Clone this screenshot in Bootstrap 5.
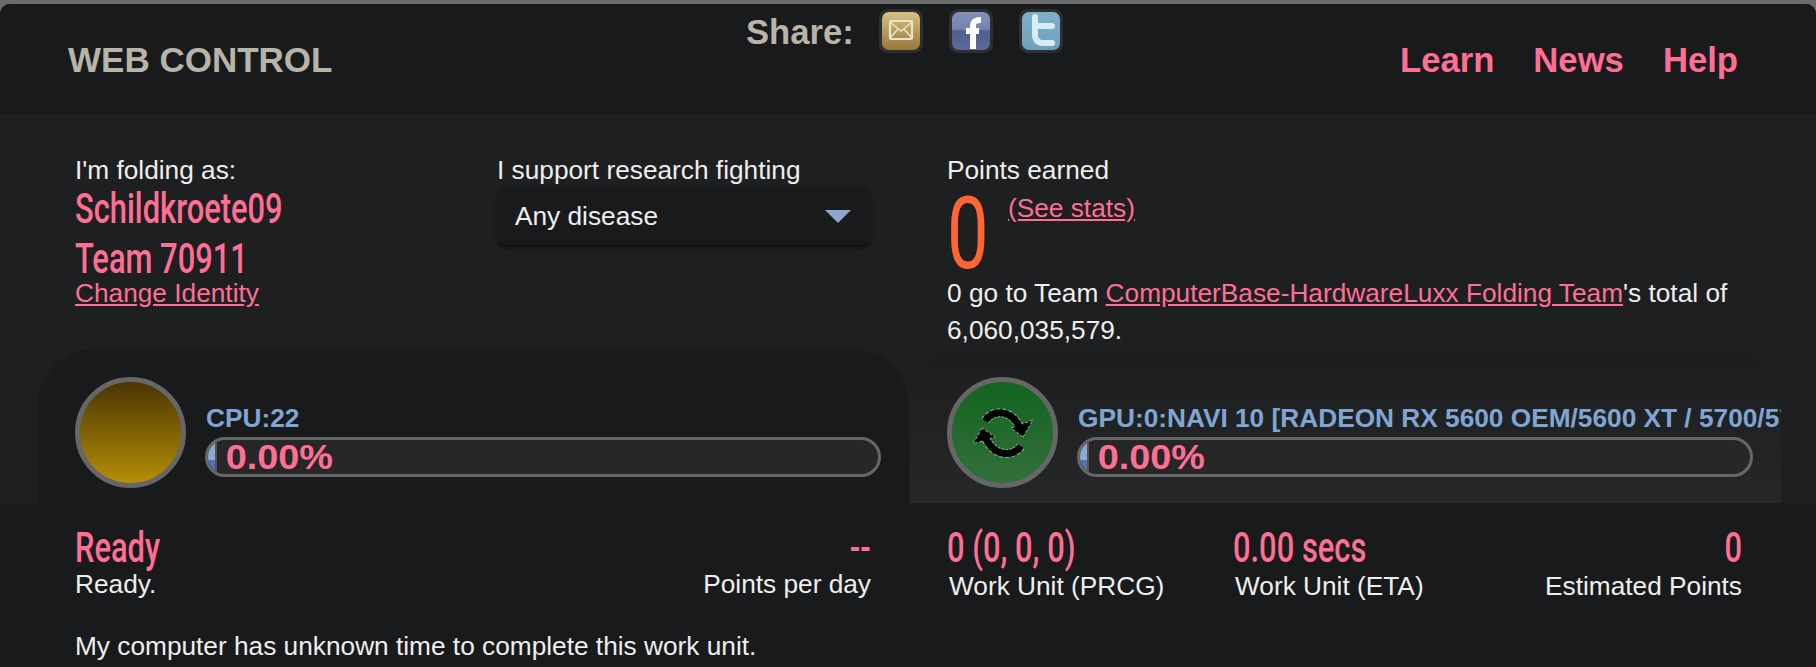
<!DOCTYPE html>
<html lang="en"><head><meta charset="utf-8"><title>Web Control</title>
<link href="https://cdn.jsdelivr.net/npm/bootstrap@5.3.0/dist/css/bootstrap.min.css" rel="stylesheet">
<style>
html,body{height:667px;overflow:hidden;background:#6b6b6b}
body{font-family:"Liberation Sans",Arial,sans-serif;font-size:26.25px;line-height:36px;color:#eee;padding-top:4px}
a{color:#ff6f94}
.shell{background:#1e1f21;border-radius:10px 10px 0 0;overflow:hidden;height:663px}
.top{height:110px;background:#191a1c;padding:0 78px 0 68px}
.brand{font-weight:700;font-size:35px;line-height:40px;color:#b8b4a8;margin-top:36px;width:678px}
.share{font-weight:700;font-size:34.67px;line-height:40px;color:#b8b4a8;gap:24px;margin-top:8px}
.share svg{display:block;width:46px;height:46px}
.icons{gap:24px;margin-top:-4px}
.navs{gap:39px;margin-top:36px;font-weight:700;font-size:34.67px;line-height:40px}
.navs a{color:#ff6f94;text-decoration:none}
.info{height:235px;padding:0 0 0 75px}
.c1{width:422px;padding-top:38px}.c2{width:450px;padding-top:38px}.c3{width:790px;padding-top:38px}
.cond{font-family:Roboto,sans-serif;font-weight:500;color:#ff6f94;transform:scaleX(.735);transform-origin:0 50%;white-space:nowrap}
.who{font-size:42px;line-height:50px}
.who-first{margin-top:-4px}
.lnk{line-height:30px;display:block;margin-top:-6px}
.pick{width:374px;height:58px;background:#191a1c;border-radius:8px;box-shadow:0 3px 3px #111;padding:0 20px 0 18px;margin-top:-1px}
.arrow{width:0;height:0;border:13px solid transparent;border-top:13px solid #8ea6cf;border-bottom:0}
.big{font-family:Roboto,sans-serif;font-size:100px;line-height:82px;color:#ff6433;margin-top:5px;width:61px;transform:scaleX(.74);transform-origin:0 50%}
.stats{margin-top:5px;line-height:30px;height:30px}
.mt-line{margin-top:0;line-height:37px}
.panels{height:154px;padding-left:38px;padding-right:35px}
.slot{width:871px;padding:28px 0 0 37px;border-radius:56px 56px 0 0;overflow:hidden;background:#191a1c}
.slot.gpu{margin-left:1px;background:linear-gradient(#1c1d1f,#262729)}
.disc{width:111px;height:111px;flex:none;border-radius:50%;border:5px solid #666;margin-right:19px}
.disc.idle{background:linear-gradient(#4a3505,#b68f08)}
.disc.run{background:linear-gradient(#12641f,#336f3c)}
.meter{flex:1;min-width:0;padding-top:26px;padding-right:28px}
.dev{font-weight:700;line-height:30px;color:#7fa6d2;white-space:nowrap;margin:0 -28px 4px 0;padding-left:1px}
.bar{height:40px;border:3px solid #666;border-radius:20px;background:#272727;overflow:hidden}
.fill{width:9px;height:100%;background:linear-gradient(#8aa9d6 60%,#4a75b0 60%);border-right:2px solid #555}
.pct{font-weight:700;font-size:35px;line-height:34px;color:#ff6f94;padding-left:8px;transform:scaleX(1.08);transform-origin:0 50%}
.lower{background:#191a1c;height:164px;padding:22px 0 0 75px}
.val{font-size:42px;line-height:46px}
.cap{line-height:30px}
.cap-up{margin-top:-2px}
.leftcol{width:796px;flex:none}
.rightcol{margin-left:76px}
.w1{width:286px}.w2{width:312px}.w3{width:197px}
.caps{margin-left:2px}
.ori-r{transform-origin:100% 50%}
.l2{margin-top:27px}
</style></head><body>
<div class="shell">
<div class="top d-flex">
  <div class="brand">WEB CONTROL</div>
  <div class="share d-flex flex-grow-1"><span>Share:</span>
    <div class="icons d-flex align-items-start">
      <svg viewBox="0 0 46 46" role="img" aria-label="Email"><rect x="1" y="1" width="44" height="44" rx="9" fill="#2d2e30"/><defs><linearGradient id="g1" x1="0" y1="0" x2="0" y2="1"><stop offset="0" stop-color="#d6c184"/><stop offset="1" stop-color="#96783a"/></linearGradient><linearGradient id="g2" x1="0" y1="0" x2="0" y2="1"><stop offset="0" stop-color="#8490b8"/><stop offset=".45" stop-color="#7583ae"/><stop offset=".5" stop-color="#525f92"/><stop offset="1" stop-color="#5b6898"/></linearGradient><linearGradient id="g3" x1="0" y1="0" x2="0" y2="1"><stop offset="0" stop-color="#7fb0c9"/><stop offset="1" stop-color="#6ea1b9"/></linearGradient></defs><rect x="4" y="4" width="38" height="38" rx="7" fill="url(#g1)"/><rect x="12" y="13" width="22" height="18" rx="1" fill="none" stroke="#ece3c8" stroke-width="2.2"/><path d="M12 14l11 9 11-9M12 30l8-9M34 30l-8-9" fill="none" stroke="#ece3c8" stroke-width="1.6"/></svg>
      <svg viewBox="0 0 46 46" role="img" aria-label="Facebook"><rect x="1" y="1" width="44" height="44" rx="9" fill="#2d2e30"/><rect x="4" y="4" width="38" height="38" rx="7" fill="url(#g2)"/><path d="M25 41V18c0-4 2-6 8-6M18 23h13" fill="none" stroke="#fff" stroke-width="6"/></svg>
      <svg viewBox="0 0 46 46" role="img" aria-label="Twitter"><rect x="1" y="1" width="44" height="44" rx="9" fill="#2d2e30"/><rect x="4" y="4" width="38" height="38" rx="7" fill="url(#g3)"/><path d="M17 9v18c0 5 3 8 8 8h9M18 18h16" fill="none" stroke="#d8ecf3" stroke-width="6" stroke-linecap="round"/></svg>
    </div>
  </div>
  <div class="navs d-flex"><a href="#">Learn</a><a href="#">News</a><a href="#">Help</a></div>
</div>
<div class="info d-flex">
  <div class="c1">I'm folding as:
    <div class="cond who who-first">Schildkroete09</div>
    <div class="cond who">Team 70911</div>
    <a class="lnk" href="#">Change Identity</a>
  </div>
  <div class="c2">I support research fighting
    <div class="pick d-flex align-items-center justify-content-between"><span>Any disease</span><span class="arrow"></span></div>
  </div>
  <div class="c3">Points earned
    <div class="d-flex"><div class="big">0</div><a class="stats d-block" href="#">(See stats)</a></div>
    <div class="mt-line">0 go to Team <a href="#">ComputerBase-HardwareLuxx Folding Team</a>'s total of<br>6,060,035,579.</div>
  </div>
</div>
<div class="panels d-flex">
  <div class="slot d-flex"><div class="disc idle"></div><div class="meter"><div class="dev">CPU:22</div><div class="bar d-flex"><div class="fill"></div><div class="pct">0.00%</div></div></div></div>
  <div class="slot gpu d-flex"><div class="disc run d-flex align-items-center justify-content-center"><svg width="60" height="50" viewBox="0 0 60 50" role="img" aria-label="Running"><g fill="none" stroke="#7fc08a" stroke-width="9" stroke-dasharray="3 2"><path d="M12 13C20 1 38 1 47 20"/><path d="M48 38C40 49 22 49 13 31"/></g><path d="M50 29L60 12 38 20z M9 20L0 36 22 29z" fill="#000" stroke="#7fc08a" stroke-width="1" stroke-dasharray="3 2"/><g fill="none" stroke="#000" stroke-width="7"><path d="M12 13C20 1 38 1 47 20"/><path d="M48 38C40 49 22 49 13 31"/></g></svg></div><div class="meter"><div class="dev">GPU:0:NAVI 10 [RADEON RX 5600 OEM/5600 XT / 5700/5700 XT]</div><div class="bar d-flex"><div class="fill"></div><div class="pct">0.00%</div></div></div></div>
</div>
<div class="lower">
  <div class="d-flex">
    <div class="leftcol d-flex justify-content-between">
      <div><div class="cond val">Ready</div><div class="cap cap-up">Ready.</div></div>
      <div class="text-end"><div class="cond val ori-r">--</div><div class="cap cap-up">Points per day</div></div>
    </div>
    <div class="rightcol d-flex">
      <div class="w1"><div class="cond val">0 (0, 0, 0)</div><div class="cap caps">Work Unit (PRCG)</div></div>
      <div class="w2"><div class="cond val">0.00 secs</div><div class="cap caps">Work Unit (ETA)</div></div>
      <div class="w3 text-end"><div class="cond val ori-r">0</div><div class="cap">Estimated Points</div></div>
    </div>
  </div>
  <div class="l2">My computer has unknown time to complete this work unit.</div>
</div>
</div>
</body></html>
